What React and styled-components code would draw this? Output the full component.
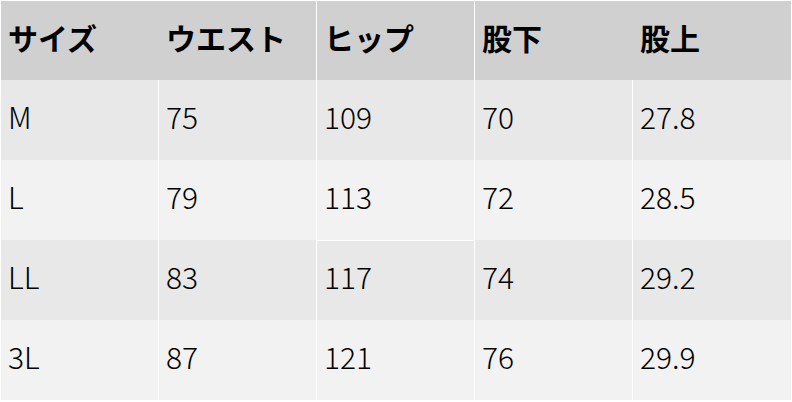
import React from 'react'
import styled, { createGlobalStyle } from 'styled-components'

const GlobalStyle = createGlobalStyle`
  html, body {
    margin: 0;
    padding: 0;
    background: #ffffff;
  }
  body {
    font-family: "Noto Sans CJK JP", "Noto Sans", sans-serif;
    color: #000;
  }
`

const headers = ['サイズ', 'ウエスト', 'ヒップ', '股下', '股上']

const rows = [
  ['M', '75', '109', '70', '27.8'],
  ['L', '79', '113', '72', '28.5'],
  ['LL', '83', '117', '74', '29.2'],
  ['3L', '87', '121', '76', '29.9'],
]

// header only shows dividers before ヒップ and 股下
const headerLines = [true, false, true, true, false]

const SizeTable = styled.table`
  width: 792px;
  table-layout: fixed;
  border-collapse: separate;
  border-spacing: 0;
  border-top: 1px solid #ffffff;
  border-bottom: 1px solid #ffffff;
`

const HeadRow = styled.tr`
  height: 79px;
  background: #d0d0d0;
`

const BodyRow = styled.tr`
  height: 80px;
  background: ${p => (p.$odd ? '#e8e8e8' : '#f2f2f2')};
`

const HeadCell = styled.th`
  box-sizing: border-box;
  width: ${p => (p.$last ? '160px' : '158px')};
  padding: 0 0 7px 7px;
  text-align: left;
  vertical-align: middle;
  font-size: 30px;
  font-weight: 700;
  line-height: 1;
  border-left: 1px solid ${p => (p.$line ? '#ffffff' : '#d0d0d0')};
  border-right: ${p => (p.$last ? '1px solid #ffffff' : 'none')};
  &:first-child {
    border-left-color: #ffffff;
  }
`

const Cell = styled.td`
  box-sizing: border-box;
  padding: 0 0 8px 7px;
  vertical-align: middle;
  font-size: 30px;
  font-weight: 300;
  line-height: 1;
  border-left: 1px solid #ffffff;
  border-right: ${p => (p.$last ? '1px solid #ffffff' : 'none')};
  box-shadow: ${p => (p.$topLine ? 'inset 0 1px 0 #ffffff' : 'none')};
`

export default function App() {
  return (
    <>
      <GlobalStyle />
      <SizeTable>
        <thead>
          <HeadRow>
            {headers.map((h, i) => (
              <HeadCell key={h} $line={headerLines[i]} $last={i === headers.length - 1}>
                {h}
              </HeadCell>
            ))}
          </HeadRow>
        </thead>
        <tbody>
          {rows.map((r, ri) => (
            <BodyRow key={r[0]} $odd={ri % 2 === 0}>
              {r.map((v, ci) => (
                <Cell key={ci} $last={ci === r.length - 1} $topLine={ri === 2 && ci === 2}>
                  {v}
                </Cell>
              ))}
            </BodyRow>
          ))}
        </tbody>
      </SizeTable>
    </>
  )
}
